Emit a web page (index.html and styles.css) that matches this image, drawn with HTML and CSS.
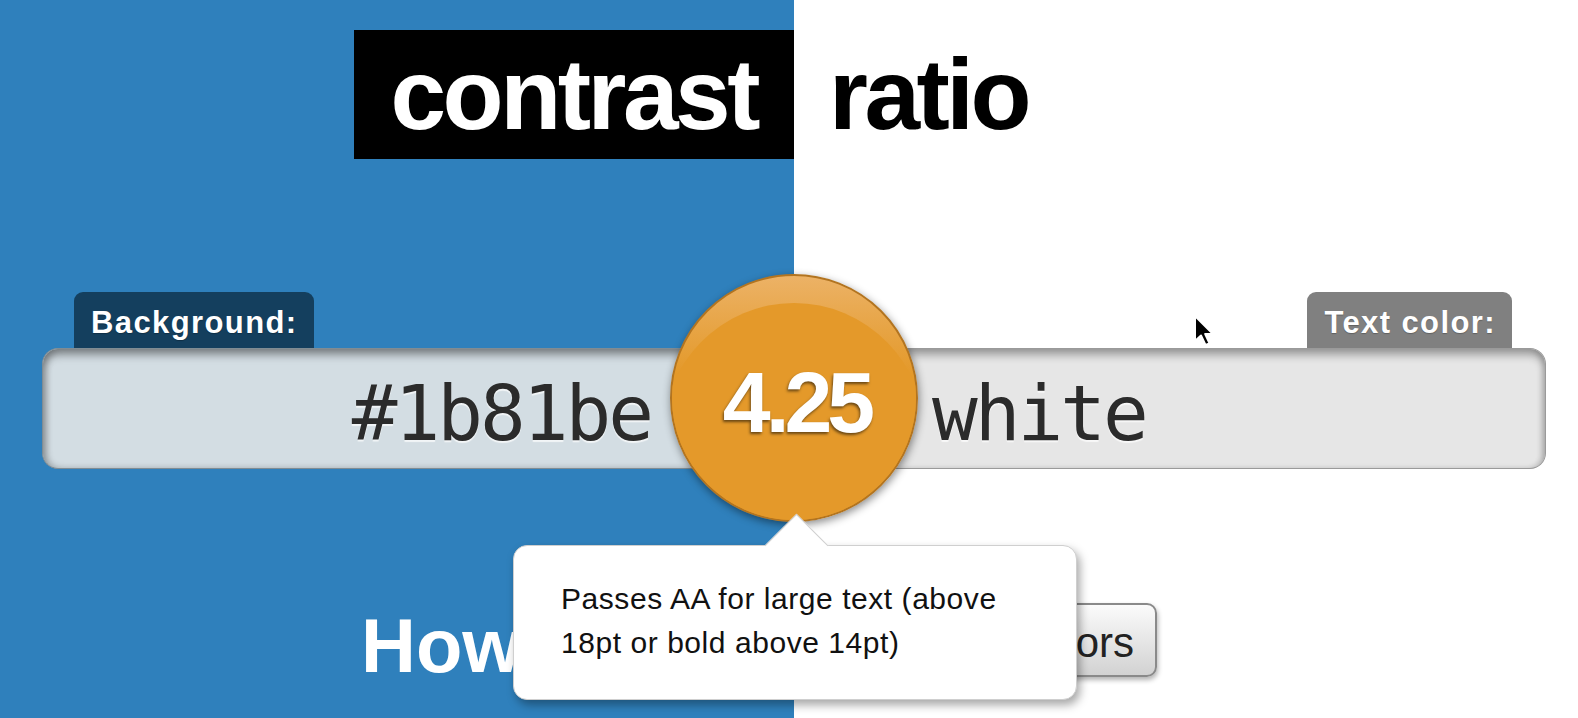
FILE: index.html
```
<!DOCTYPE html>
<html lang="en">
<head>
<meta charset="utf-8">
<title>Contrast Ratio</title>
<link rel="stylesheet" href="styles.css">
</head>
<body>
<h1 class="title">
  <span class="title-left"><span class="title-box">contrast</span></span>
  <span class="title-right">ratio</span>
</h1>
<form class="form">
  <div class="labels">
    <label class="tab tab-bg" for="background">Background:</label>
    <label class="tab tab-fg" for="foreground">Text color:</label>
  </div>
  <div class="fields">
    <input class="field field-bg" id="background" value="#1b81be">
    <input class="field field-fg" id="foreground" value="white">
    <output class="ratio"><span>4.25</span></output>
  </div>
  <div class="tip">Passes AA for large text (above 18pt or bold above 14pt)</div>
</form>
<div class="bottom">
  <h2 class="how">How</h2>
  <button class="swap" type="button">Swap colors</button>
</div>
<svg class="cursor" width="22" height="34" viewBox="0 0 22 34">
  <path d="M2 2 L2 27 L8 21.5 L12.5 31 L16.5 29.3 L12.2 20 L20 20 Z" fill="#000" stroke="#fff" stroke-width="2" stroke-linejoin="round"/>
</svg>
</body>
</html>
```
FILE: styles.css
```
* { box-sizing: border-box; }
html, body { margin: 0; padding: 0; }
body {
  width: 1578px;
  height: 718px;
  overflow: hidden;
  position: relative;
  background: linear-gradient(to right, #2f80bc 794px, #ffffff 794px);
  font-family: "Liberation Sans", Arial, sans-serif;
}
.title {
  display: flex;
  margin: 30px 0 0;
  font-size: 100px;
  font-weight: bold;
  letter-spacing: -3.5px;
  line-height: 128px;
}
.title-left {
  width: 794px;
  display: flex;
  justify-content: flex-end;
}
.title-box {
  background: #000;
  color: #fff;
  padding: 0 37px 1px 36px;
}
.title-right {
  color: #000;
  padding: 0 0 1px 35px;
}
.form {
  position: relative;
  margin: 133px 0 0 42px;
  width: 1504px;
}
.labels {
  display: flex;
  justify-content: space-between;
  padding: 0 34px 0 32px;
  height: 56px;
}
.tab {
  height: 56px;
  font-size: 31px;
  font-weight: bold;
  color: #fff;
  letter-spacing: 1.4px;
  line-height: 50px;
  padding: 6px 16px 0 17px;
  border-radius: 9px 9px 0 0;
  text-shadow: 0 1px 1px rgba(0,0,0,.25);
}
.tab-bg { background: #143f5e; }
.tab-fg { background: #808080; }
.fields {
  display: flex;
  position: relative;
  height: 121px;
}
.field {
  width: 752px;
  height: 121px;
  margin: 0;
  font-family: "DejaVu Sans Mono", monospace;
  font-size: 76px;
  letter-spacing: -3px;
  color: #2b2b2b;
  padding: 10px 0 0;
  outline: none;
  text-shadow: 0 2px 1px rgba(255,255,255,.7);
}
.field-bg {
  background: #d3dde3;
  text-align: right;
  padding-right: 143px;
  border: 1px solid #7f8c94;
  border-right: none;
  border-radius: 16px 0 0 16px;
  box-shadow: inset 0 6px 8px rgba(0,0,0,.38), inset 4px 0 6px rgba(0,0,0,.18);
}
.field-fg {
  background: #e6e6e6;
  padding-left: 138px;
  border: 1px solid #9a9a9a;
  border-left: none;
  border-radius: 0 16px 16px 0;
  box-shadow: inset 0 6px 8px rgba(0,0,0,.32), inset -3px 0 5px rgba(0,0,0,.12);
}
.ratio {
  position: absolute;
  left: 628px;
  top: -74px;
  width: 248px;
  height: 248px;
  border-radius: 50%;
  border: 2px solid #b27420;
  background: linear-gradient(#ecb266, #e7a444 22%, #e4992a 40%);
  box-shadow: 1px 3px 8px rgba(0,0,0,.45);
  display: flex;
  align-items: center;
  justify-content: center;
  padding-top: 8px;
  overflow: hidden;
  color: #fff;
  font-weight: bold;
  font-size: 86px;
  letter-spacing: -5px;
  line-height: 1;
  text-shadow: -1px 2px 3px rgba(0,0,0,.55);
}
.ratio::before {
  content: "";
  position: absolute;
  left: -10px;
  right: -10px;
  top: 27px;
  height: 270px;
  border-radius: 50%;
  background: #e4992a;
}
.ratio span {
  position: relative;
  padding-left: 5px;
}
.tip {
  position: absolute;
  left: 471px;
  top: 253px;
  width: 564px;
  height: 155px;
  background: #fff;
  border: 1px solid #cfcfcf;
  border-radius: 14px;
  box-shadow: 3px 5px 10px rgba(0,0,0,.35);
  padding: 31px 40px 0 47px;
  font-size: 30px;
  line-height: 44px;
  letter-spacing: .55px;
  color: #111;
}
.tip::before {
  content: "";
  position: absolute;
  left: 260px;
  top: -23px;
  width: 44px;
  height: 44px;
  background: #fff;
  border-left: 1px solid #cfcfcf;
  border-top: 1px solid #cfcfcf;
  transform: rotate(45deg);
}
.bottom {
  display: flex;
  justify-content: space-between;
  align-items: flex-start;
  margin-top: 134px;
  padding: 0 421px 0 361px;
}
.how {
  margin: 5px 0 0;
  font-size: 76px;
  line-height: 76px;
  font-weight: bold;
  color: #fff;
}
.swap {
  height: 74px;
  font-family: "Liberation Sans", Arial, sans-serif;
  font-size: 42px;
  line-height: normal;
  padding: 14px 21px 8px;
  border: 2px solid #8a8a8a;
  border-radius: 10px;
  background: linear-gradient(#fbfbfb, #d2d2d2);
  color: #222;
  box-shadow: 1px 3px 5px rgba(0,0,0,.3);
}
.cursor {
  position: absolute;
  left: 1193px;
  top: 314px;
}
```
